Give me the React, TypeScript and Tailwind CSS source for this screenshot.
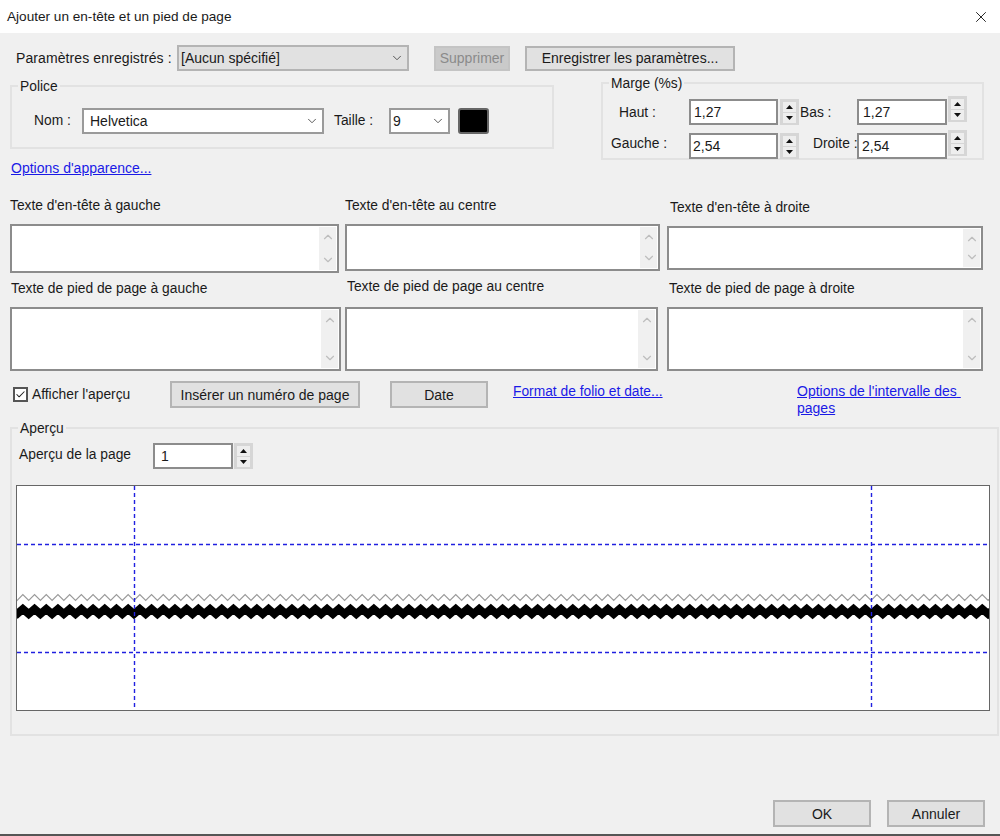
import { Check, ChevronDown, ChevronUp, X } from "lucide-react";

const font = { fontFamily: '"Liberation Sans", Arial, sans-serif' };

function Btn({ label, className, disabled }: { label: string; className: string; disabled?: boolean }) {
  return (
    <button
      className={`flex shrink-0 items-center justify-center border-2 text-[14px] ${
        disabled ? "border-[#c4c4c4] bg-[#cacaca] text-[#8a8a8a]" : "border-[#b4b4b4] bg-[#e1e1e1] text-[#1a1a1a]"
      } ${className}`}
    >
      {label}
    </button>
  );
}

function Spin({ className = "" }: { className?: string }) {
  return (
    <div className={`flex h-[26px] w-[19px] shrink-0 flex-col items-center justify-center gap-[1px] border-2 border-[#d6d6d6] bg-[#d6d6d6] ${className}`}>
      {[0, 1].map((i) => (
        <div key={i} className="flex h-[10px] w-[13px] items-center justify-center bg-[#eeeeee]">
          <svg width="7" height="4" viewBox="0 0 7 4">
            <path d={i === 0 ? "M3.5 0 7 4H0Z" : "M0 0h7L3.5 4Z"} fill="#111" />
          </svg>
        </div>
      ))}
    </div>
  );
}

function NumInput({ value, className = "" }: { value: string; className?: string }) {
  return (
    <div className={`flex h-[26px] shrink-0 items-center border-2 border-[#8c8c8c] bg-white text-[14px] text-[#1a1a1a] ${className}`}>
      {value}
    </div>
  );
}

function Combo({ value, className, inset = 6 }: { value: string; className: string; inset?: number }) {
  return (
    <div className={`flex h-[26px] shrink-0 items-center justify-between border-2 pr-[3px] text-[14px] text-[#1a1a1a] ${className}`}>
      <span style={{ paddingLeft: inset }}>{value}</span>
      <ChevronDown size={14} strokeWidth={1.5} color="#444" />
    </div>
  );
}

function TextBox({ className }: { className: string }) {
  return (
    <div className={`flex justify-end border-2 border-[#8c8c8c] bg-white p-[1px] ${className}`}>
      <div className="flex w-[17px] flex-col items-center justify-between bg-[#f0f0f0] py-[3px]">
        <ChevronUp size={14} strokeWidth={2} color="#bdbdbd" />
        <ChevronDown size={14} strokeWidth={2} color="#bdbdbd" />
      </div>
    </div>
  );
}

function Preview() {
  const w = 972;
  const zig = (y: number, amp: number) => {
    let d = `M-6 ${y}`;
    for (let x = 0, i = 0; x <= w + 6; x += 5.85, i++) d += `L${x} ${y + (i % 2 ? -amp : amp)}`;
    return d;
  };
  return (
    <svg width={w} height={224} className="block">
      <path d={zig(111.5, 3)} fill="none" stroke="#9a9a9a" strokeWidth="1.2" />
      <path d={zig(125.5, 2.5)} fill="none" stroke="#000" strokeWidth="8" strokeMiterlimit="10" />
      <g stroke="#2020e0" strokeWidth="1.4" strokeDasharray="4 3">
        <path d="M0 58.5H972" />
        <path d="M0 166.5H972" />
        <path d="M117.5 0V224" />
        <path d="M854.5 0V224" />
      </g>
    </svg>
  );
}

export default function App() {
  return (
    <div className="flex h-[836px] w-[1000px] flex-col overflow-hidden bg-[#f0f0f0] text-[13.8px] leading-[16px] text-[#1a1a1a]" style={font}>
      <div className="flex h-[33px] shrink-0 items-center justify-between bg-white pl-[7px] pr-[10px] text-[13.6px]">
        <span>Ajouter un en-tête et un pied de page</span>
        <X size={18} strokeWidth={1.3} color="#222" />
      </div>

      <div className="flex min-h-0 flex-1 flex-col border-b-2 border-[#555]">
        {/* paramètres */}
        <div className="mt-[12px] flex h-[26px] items-center pl-[16px]">
          <span className="w-[161px] text-[14px] tracking-[0.1px]">Paramètres enregistrés :</span>
          <Combo value="[Aucun spécifié]" className="w-[232px] border-[#b4b4b4] bg-[#e1e1e1]" inset={2} />
          <Btn label="Supprimer" disabled className="ml-[25px] h-[25px] w-[76px]" />
          <Btn label="Enregistrer les paramètres..." className="ml-[15px] h-[25px] w-[210px]" />
        </div>

        <div className="flex items-start">
          <div className="ml-[10px] w-[544px]">
            <fieldset className="mt-[6px] h-[72px] border-2 border-[#e2e2e2] pl-[8px]">
              <legend className="-ml-[2px] px-[2px] pt-[2px]">Police</legend>
              <div className="mt-[13px] flex items-center">
                <span className="ml-[14px] w-[48px]">Nom :</span>
                <Combo value="Helvetica" className="w-[242px] border-[#9a9a9a] bg-white" />
                <span className="ml-[10px] w-[55px]">Taille :</span>
                <Combo value="9" className="w-[61px] border-[#9a9a9a] bg-white" inset={2} />
                <div className="ml-[8px] h-[26px] w-[31px] rounded-[3px] border-2 border-[#666] bg-black" />
              </div>
            </fieldset>
            <a className="mt-[11px] block pl-px text-[14px] text-[#1a1ae6] underline">Options d'apparence...</a>
          </div>

          <fieldset className="ml-[47px] mt-[3px] h-[86px] w-[383px] border-2 border-[#e2e2e2] pl-[8px]">
            <legend className="-ml-[2px] px-[2px] pt-[2px]">Marge (%s)</legend>
            <div className="mt-[7px] flex items-start">
              <span className="mt-[6px] w-[78px] pl-[8px]">Haut :</span>
              <NumInput value="1,27" className="w-[89px] pl-[3px]" />
              <Spin className="ml-[2px]" />
              <span className="ml-px mt-[6px] w-[57px]">Bas :</span>
              <NumInput value="1,27" className="w-[90px] pl-[4px]" />
              <Spin className="ml-px -mt-[3px]" />
            </div>
            <div className="mt-[8px] flex items-start">
              <span className="mt-[3px] w-[78px]">Gauche :</span>
              <NumInput value="2,54" className="w-[89px] pl-[2px]" />
              <Spin className="ml-[2px]" />
              <span className="ml-[14px] mt-[3px] w-[44px] whitespace-nowrap">Droite :</span>
              <NumInput value="2,54" className="w-[90px] pl-[3px]" />
              <Spin className="ml-px -mt-[3px]" />
            </div>
          </fieldset>
        </div>

        {/* zones de texte */}
        <div className="mt-[20px] flex items-start pl-[10px]">
          <div className="w-[335px]">
            <div className="mt-[2px]">Texte d'en-tête à gauche</div>
            <TextBox className="mt-[10px] h-[49px] w-[329px]" />
            <div className="mt-[8px] pl-px">Texte de pied de page à gauche</div>
            <TextBox className="mt-[10px] h-[64px] w-[331px]" />
          </div>
          <div className="w-[322px]">
            <div className="mt-[2px]">Texte d'en-tête au centre</div>
            <TextBox className="mt-[10px] h-[47px] w-[315px]" />
            <div className="mt-[8px] pl-[2px]">Texte de pied de page au centre</div>
            <TextBox className="mt-[12px] h-[64px] w-[313px]" />
          </div>
          <div className="w-[316px]">
            <div className="mt-[4px] pl-[3px]">Texte d'en-tête à droite</div>
            <TextBox className="mt-[10px] h-[44px] w-[316px]" />
            <div className="mt-[11px] pl-[2px]">Texte de pied de page à droite</div>
            <TextBox className="mt-[10px] h-[64px] w-[316px]" />
          </div>
        </div>

        {/* actions */}
        <div className="mt-[10px] flex h-[38px] items-start pl-[13px]">
          <div className="mt-[6px] flex h-[15px] w-[15px] items-center justify-center border-2 border-[#555] bg-white">
            <Check size={13} strokeWidth={2.2} color="#222" />
          </div>
          <span className="ml-[4px] mt-[6px] w-[138px]">Afficher l'aperçu</span>
          <Btn label="Insérer un numéro de page" className="h-[27px] w-[190px]" />
          <Btn label="Date" className="ml-[30px] h-[27px] w-[98px]" />
          <a className="ml-[25px] mt-[3px] w-[149px] whitespace-nowrap text-[#1a1ae6] underline">Format de folio et date...</a>
          <a className="ml-[135px] mt-[2px] w-[170px] text-[14px] leading-[17px] text-[#1a1ae6] underline">
            Options de l'intervalle des{"\u00a0"}
            <br />
            pages
          </a>
        </div>

        {/* aperçu */}
        <fieldset className="ml-[10px] h-[317px] w-[989px] border-2 border-[#e2e2e2] pl-[7px]">
          <legend className="-ml-px px-[2px] pt-[2px]">Aperçu</legend>
          <div className="mt-[6px] flex items-center">
            <span className="-mt-[2px] w-[134px]">Aperçu de la page</span>
            <NumInput value="1" className="w-[80px] pl-[6px]" />
            <Spin className="ml-px" />
          </div>
          <div className="-ml-[3px] mt-[16px] w-[974px] border border-[#666] bg-white">
            <Preview />
          </div>
        </fieldset>

        <div className="mt-auto flex justify-end gap-[16px] pb-[7px] pr-[15px]">
          <Btn label="OK" className="h-[27px] w-[98px]" />
          <Btn label="Annuler" className="h-[27px] w-[98px]" />
        </div>
      </div>
    </div>
  );
}
